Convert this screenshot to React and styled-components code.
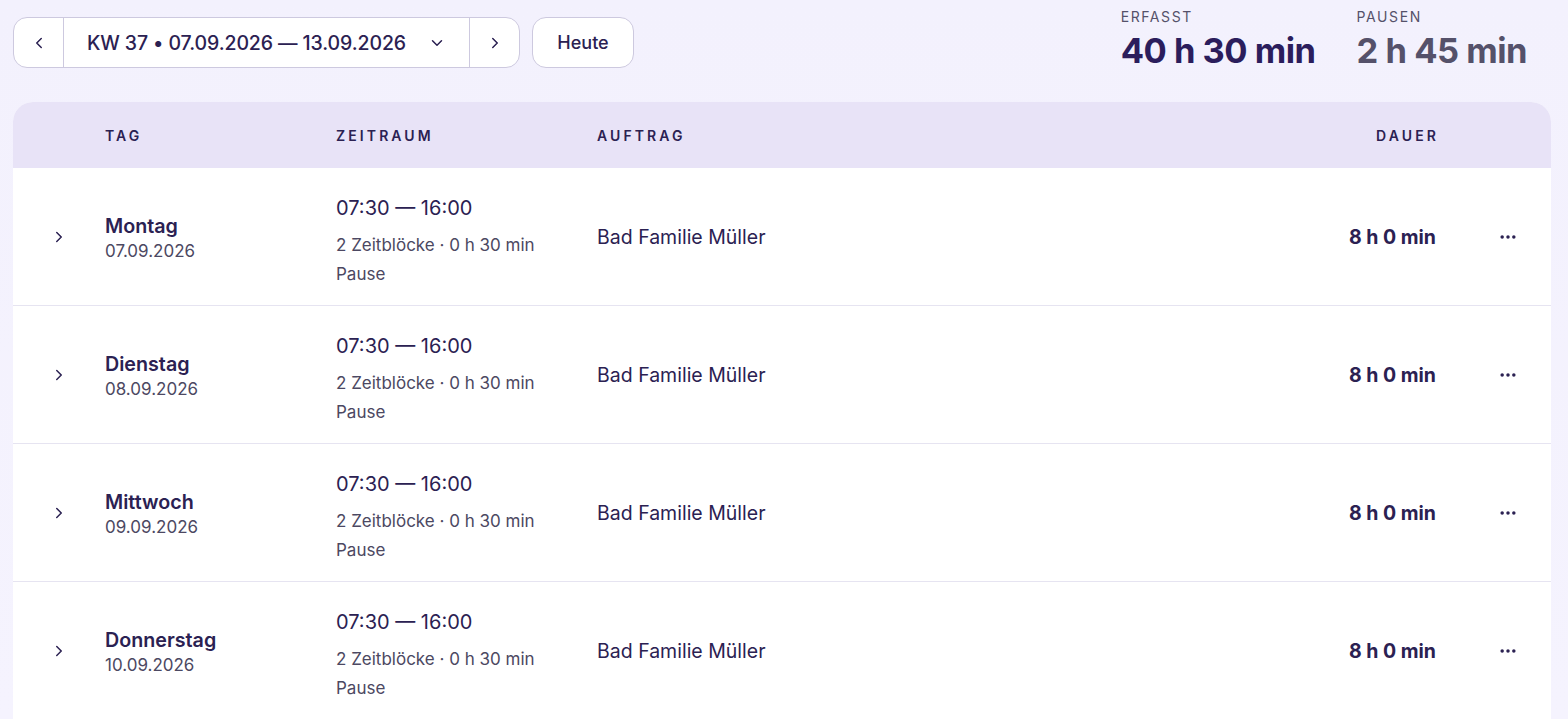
import styled, { createGlobalStyle } from 'styled-components';
import { ChevronLeft, ChevronRight, ChevronDown, MoreHorizontal } from 'lucide-react';

const GlobalStyle = createGlobalStyle`
  * { box-sizing: border-box; }
  html, body {
    margin: 0;
    background: #f4f2fd;
    font-family: Inter, 'Noto Sans', sans-serif;
    color: #2b2152;
    overflow: hidden;
  }
`;

const days = [
  { name: 'Montag', date: '07.09.2026' },
  { name: 'Dienstag', date: '08.09.2026' },
  { name: 'Mittwoch', date: '09.09.2026' },
  { name: 'Donnerstag', date: '10.09.2026' },
];

const App = () => {
  return (
    <Page>
      <GlobalStyle />
      <TopBar>
        <Controls>
          <WeekPicker>
            <NavButton aria-label='Vorherige Woche'>
              <ChevronLeft size={18} strokeWidth={2} />
            </NavButton>
            <WeekLabel>
              KW 37 • 07.09.2026 — 13.09.2026
              <ChevronDown size={18} strokeWidth={2} />
            </WeekLabel>
            <NavButton aria-label='Nächste Woche'>
              <ChevronRight size={18} strokeWidth={2} />
            </NavButton>
          </WeekPicker>
          <TodayButton>Heute</TodayButton>
        </Controls>
        <Stats>
          <Stat>
            <StatLabel>Erfasst</StatLabel>
            <StatValue>40 h 30 min</StatValue>
          </Stat>
          <Stat>
            <StatLabel>Pausen</StatLabel>
            <StatValue $muted>2 h 45 min</StatValue>
          </Stat>
        </Stats>
      </TopBar>

      <Card>
        <HeaderRow>
          <span />
          <HeadCell>Tag</HeadCell>
          <HeadCell>Zeitraum</HeadCell>
          <HeadCell>Auftrag</HeadCell>
          <HeadCell $right>Dauer</HeadCell>
          <span />
        </HeaderRow>
        {days.map((d) => (
          <Row key={d.name}>
            <Expand>
              <ChevronRight size={18} strokeWidth={2} />
            </Expand>
            <DayCell>
              <DayName>{d.name}</DayName>
              <DayDate>{d.date}</DayDate>
            </DayCell>
            <TimeCell>
              <TimeRange>07:30 — 16:00</TimeRange>
              <TimeMeta>2 Zeitblöcke · 0 h 30 min Pause</TimeMeta>
            </TimeCell>
            <Job>Bad Familie Müller</Job>
            <Duration>8 h 0 min</Duration>
            <Actions>
              <MoreHorizontal size={20} strokeWidth={2.2} />
            </Actions>
          </Row>
        ))}
      </Card>
    </Page>
  );
};

const Page = styled.main`
  padding: 8px 17px 0 13px;
  height: 100vh;
  background: linear-gradient(180deg, #f3f1fd 0%, #f5f3fe 100%);
`;

const TopBar = styled.header`
  display: flex;
  justify-content: space-between;
  align-items: flex-start;
`;

const Controls = styled.div`
  display: flex;
  gap: 12px;
  margin-top: 9px;
`;

const WeekPicker = styled.div`
  display: flex;
  height: 51px;
  background: #fff;
  border: 1px solid #cdc9df;
  border-radius: 14px;
  overflow: hidden;
`;

const NavButton = styled.button`
  width: 50px;
  border: none;
  background: transparent;
  color: #2b2152;
  display: flex;
  align-items: center;
  justify-content: center;
  cursor: pointer;
  &:first-child { border-right: 1px solid #cdc9df; }
  &:last-child { border-left: 1px solid #cdc9df; }
`;

const WeekLabel = styled.div`
  width: 405px;
  display: flex;
  align-items: center;
  justify-content: center;
  gap: 22px;
  font-size: 19.5px;
  font-weight: 500;
  letter-spacing: -0.1px;
  color: #2b2152;
`;

const TodayButton = styled.button`
  height: 51px;
  width: 102px;
  background: #fff;
  border: 1px solid #cdc9df;
  border-radius: 14px;
  font-family: inherit;
  font-size: 18px;
  font-weight: 500;
  color: #2b2152;
  cursor: pointer;
`;

const Stats = styled.div`
  display: flex;
  gap: 41px;
  padding-right: 24px;
`;

const Stat = styled.div`
  display: flex;
  flex-direction: column;
  gap: 4px;
`;

const StatLabel = styled.span`
  font-size: 14px;
  line-height: 18px;
  letter-spacing: 1.6px;
  text-transform: uppercase;
  color: #55516a;
`;

const StatValue = styled.span`
  font-size: 34.5px;
  line-height: 42px;
  font-weight: 700;
  letter-spacing: -0.5px;
  color: ${(p) => (p.$muted ? '#55516a' : '#2b1d5c')};
`;

const Card = styled.section`
  margin-top: 30px;
  background: #fff;
  border-radius: 20px 20px 0 0;
  overflow: hidden;
`;

const columns = `92px 231px 261px 1fr 160px 115px`;

const HeaderRow = styled.div`
  display: grid;
  grid-template-columns: ${columns};
  align-items: center;
  height: 66px;
  background: #e8e3f7;
`;

const HeadCell = styled.span`
  font-size: 14px;
  font-weight: 600;
  letter-spacing: 3.1px;
  text-transform: uppercase;
  color: #2b2152;
  text-align: ${(p) => (p.$right ? 'right' : 'left')};
  margin-right: ${(p) => (p.$right ? '-3px' : '0')};
`;

const Row = styled.div`
  display: grid;
  grid-template-columns: ${columns};
  align-items: center;
  height: 138px;
  border-bottom: 1px solid #e6e4f1;
`;

const Expand = styled.div`
  display: flex;
  justify-content: center;
  color: #2b2152;
`;

const DayCell = styled.div`
  display: flex;
  flex-direction: column;
  gap: 3px;
  margin-top: 2px;
`;

const DayName = styled.span`
  font-size: 19.7px;
  font-weight: 600;
  color: #2b2152;
`;

const DayDate = styled.span`
  font-size: 17px;
  color: #4c4862;
`;

const TimeCell = styled.div`
  display: flex;
  flex-direction: column;
  gap: 11px;
  margin-top: 12px;
`;

const TimeRange = styled.span`
  font-size: 20px;
  line-height: 24px;
  color: #2b2152;
`;

const TimeMeta = styled.span`
  max-width: 215px;
  font-size: 17px;
  line-height: 29px;
  color: #4c4862;
`;

const Job = styled.span`
  font-size: 19.5px;
  color: #2b2152;
`;

const Duration = styled.span`
  font-size: 19.5px;
  font-weight: 700;
  text-align: right;
  color: #2b2152;
`;

const Actions = styled.div`
  display: flex;
  justify-content: flex-end;
  padding-right: 33px;
  color: #2b2152;
`;

export default App;
